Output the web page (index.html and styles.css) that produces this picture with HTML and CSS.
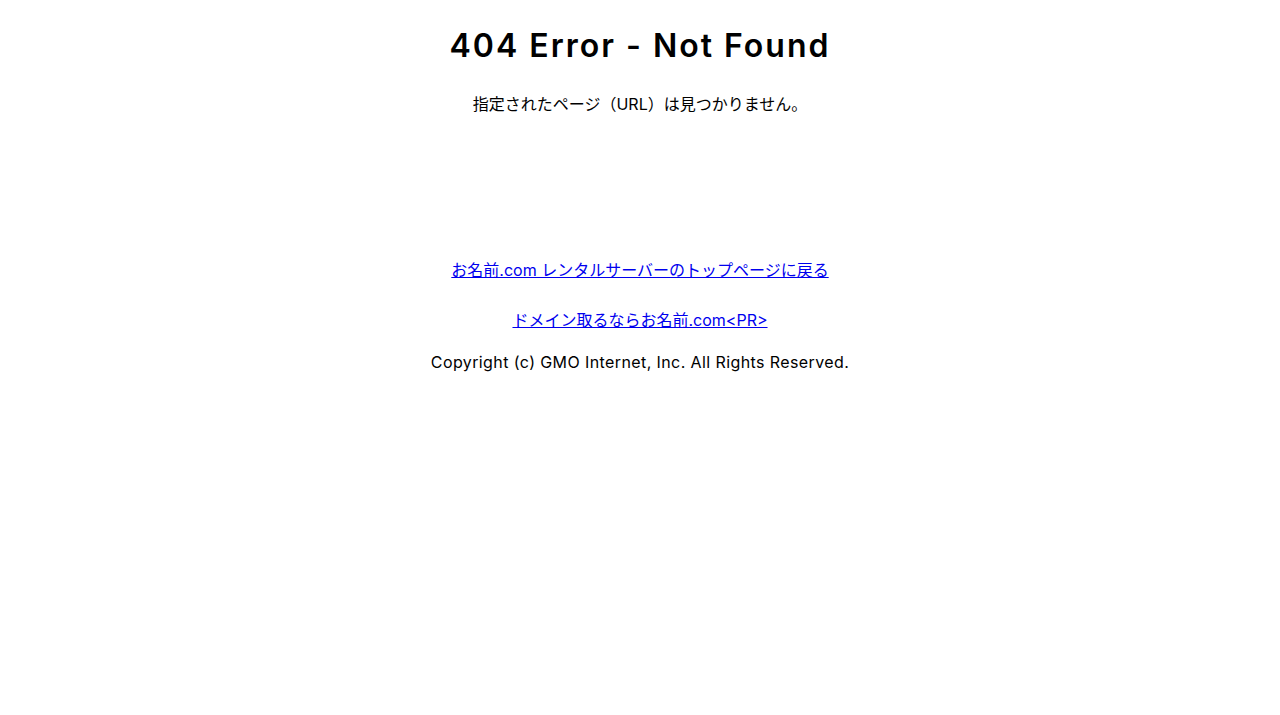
FILE: index.html
```html
<!DOCTYPE html>
<html lang="ja">
<head>
<meta charset="utf-8">
<title>404 Error - Not Found</title>
<link rel="stylesheet" href="styles.css">
</head>
<body>
<main class="page">
  <h1 class="title">404 Error - Not Found</h1>
  <p class="lead">指定されたページ（URL）は見つかりません。</p>
  <p class="link-row link-top"><a href="#">お名前.com レンタルサーバーのトップページに戻る</a></p>
  <p class="link-row link-pr"><a href="#">ドメイン取るならお名前.com&lt;PR&gt;</a></p>
  <p class="copyright">Copyright (c) GMO Internet, Inc. All Rights Reserved.</p>
</main>
</body>
</html>
```

FILE: styles.css
```css
html, body {
  background: #ffffff;
}
body {
  margin: 0;
  padding: 8px;
  font-family: Inter, "Noto Sans CJK JP", sans-serif;
  color: #000000;
  font-size: 16px;
}
.page {
  display: flex;
  flex-direction: column;
  align-items: center;
  text-align: center;
}
.title {
  margin: 18px 0 0;
  font-size: 32px;
  font-weight: 600;
  line-height: 40px;
  letter-spacing: 2px;
}
.lead {
  margin: 26px 0 0;
  line-height: 24px;
}
.link-row {
  margin: 0;
  line-height: 24px;
}
.link-top {
  margin-top: 142px;
}
.link-pr {
  margin-top: 26px;
}
.link-row a {
  color: #0000ee;
  text-decoration: underline;
}
.copyright {
  margin: 18px 0 0;
  line-height: 24px;
  letter-spacing: 0.4px;
}
```
